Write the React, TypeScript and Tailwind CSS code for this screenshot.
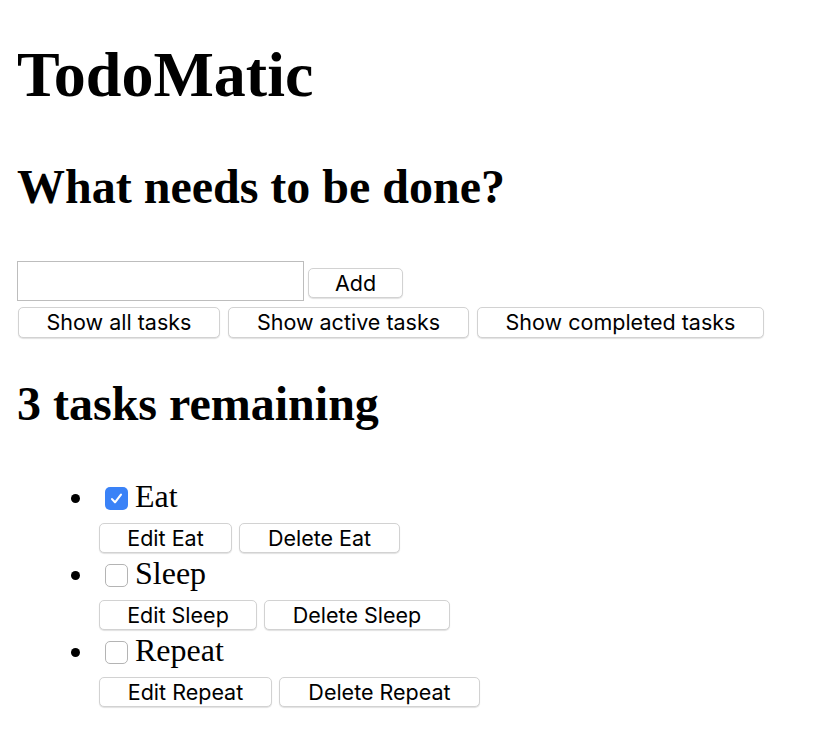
import { useState } from "react";

type Task = { id: string; name: string; done: boolean; editW: string; deleteW: string };

const initialTasks: Task[] = [
  { id: "todo-0", name: "Eat", done: true, editW: "w-[133px]", deleteW: "w-[161px]" },
  { id: "todo-1", name: "Sleep", done: false, editW: "w-[158px]", deleteW: "w-[186px]" },
  { id: "todo-2", name: "Repeat", done: false, editW: "w-[173px]", deleteW: "w-[201px]" },
];

const btn =
  "flex items-center justify-center rounded-[5px] border border-[#d2d2d2] bg-white text-[21.5px] text-black shadow-[0_1px_1px_rgba(0,0,0,0.12)] font-['Inter',sans-serif]";

function Checkbox({ checked, onChange }: { checked: boolean; onChange: () => void }) {
  return (
    <button
      type="button"
      role="checkbox"
      aria-checked={checked}
      onClick={onChange}
      className={
        checked
          ? "mt-[9px] ml-[6px] flex h-[23px] w-[23px] items-center justify-center rounded-[5px] bg-[#3a82f7]"
          : "mt-[9px] ml-[6px] flex h-[23px] w-[23px] items-center justify-center rounded-[5px] border border-[#b4b4b4] bg-white"
      }
    >
      {checked && (
        <svg viewBox="0 0 16 16" className="h-[17px] w-[17px]" fill="none">
          <path d="M3.8 8.6l2.8 3 5.6-7.2" stroke="white" strokeWidth="2" strokeLinecap="round" strokeLinejoin="round" />
        </svg>
      )}
    </button>
  );
}

export default function App() {
  const [tasks, setTasks] = useState(initialTasks);
  const remaining = tasks.length;

  return (
    <div className="min-h-screen bg-white pl-[17px] text-black font-['Liberation_Serif',serif]">
      <h1 className="pt-[43px] text-[64px] font-bold leading-[64px]">TodoMatic</h1>

      <form onSubmit={(e) => e.preventDefault()}>
        <h2 className="mt-[56px] text-[48px] font-bold leading-[48px]">What needs to be done?</h2>
        <div className="mt-[50px] flex items-end gap-[4px]">
          <input type="text" className="h-[40px] w-[287px] border border-[#bdbdbd] bg-white outline-none" />
          <button type="submit" className={`${btn} mb-[3px] h-[30px] w-[95px]`}>
            Add
          </button>
        </div>
      </form>

      <div className="mt-[6px] ml-[1px] flex gap-[8px]">
        <button type="button" className={`${btn} h-[31px] w-[202px]`}>Show all tasks</button>
        <button type="button" className={`${btn} h-[31px] w-[241px]`}>Show active tasks</button>
        <button type="button" className={`${btn} h-[31px] w-[287px]`}>Show completed tasks</button>
      </div>

      <h2 className="mt-[42px] text-[48px] font-bold leading-[48px]">{remaining} tasks remaining</h2>

      <ul className="mt-[50px] flex flex-col gap-[2px]">
        {tasks.map((t) => (
          <li key={t.id} className="flex items-start">
            <span className="mt-[16px] ml-[54px] mr-[19px] h-[9px] w-[9px] rounded-full bg-black" />
            <div className="flex flex-col">
              <div className="flex h-[36px] items-start">
                <Checkbox
                  checked={t.done}
                  onChange={() =>
                    setTasks(tasks.map((x) => (x.id === t.id ? { ...x, done: !x.done } : x)))
                  }
                />
                <label className="ml-[7px] text-[32px] leading-[36px]">{t.name}</label>
              </div>
              <div className="mt-[9px] flex gap-[7px]">
                <button type="button" className={`${btn} h-[30px] ${t.editW}`}>Edit {t.name}</button>
                <button type="button" className={`${btn} h-[30px] ${t.deleteW}`}>Delete {t.name}</button>
              </div>
            </div>
          </li>
        ))}
      </ul>
    </div>
  );
}
